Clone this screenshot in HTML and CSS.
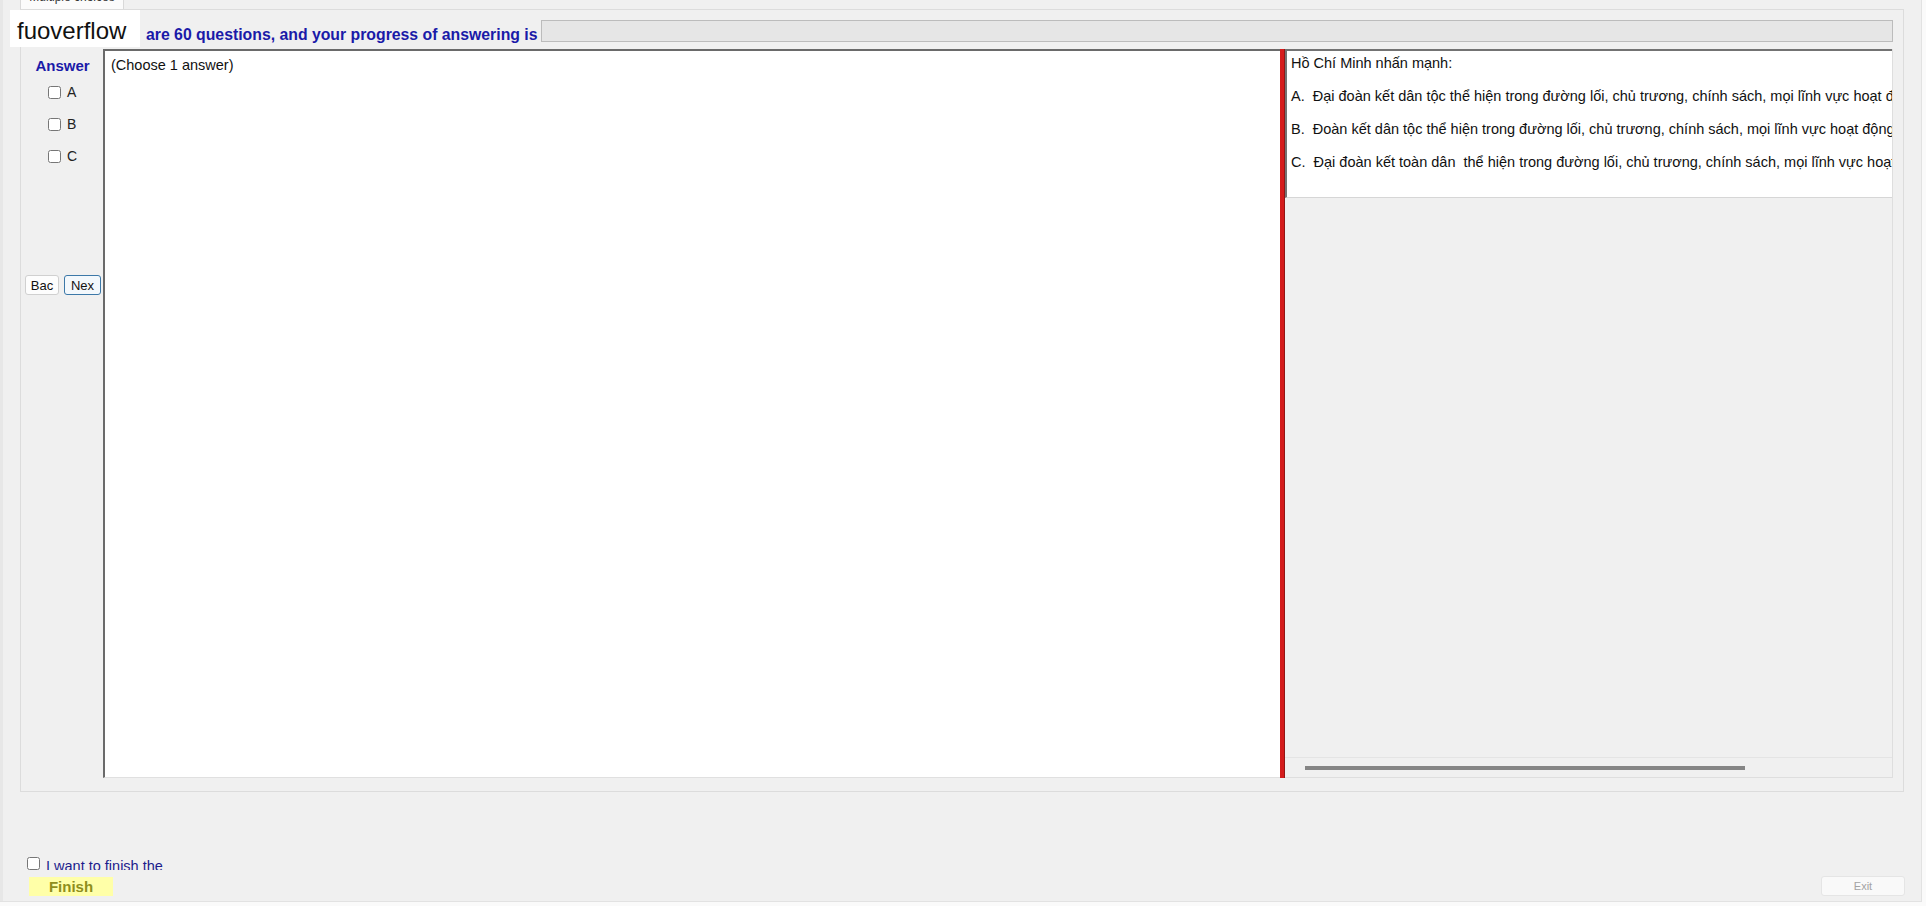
FILE: index.html
```html
<!DOCTYPE html>
<html lang="vi">
<head>
    <meta charset="UTF-8">
    <meta name="viewport" content="width=device-width, initial-scale=1.0">
    <title>Multiple choices</title>
    <link rel="stylesheet" href="styles.css">
</head>
<body>
    <div class="window">
        <div class="tabs">
            <div class="tab"><span>Multiple choices</span></div>
        </div>

        <div class="tabpage">
            <div class="header">
                <span class="count">are 60 questions, and your progress of answering is</span>
                <div class="progress"></div>
            </div>

            <div class="group">
                <div class="answers">
                    <div class="answer-title">Answer</div>
                    <label class="opt"><input type="checkbox"> A</label>
                    <label class="opt"><input type="checkbox"> B</label>
                    <label class="opt"><input type="checkbox"> C</label>
                    <div class="nav">
                        <button class="nav-btn">Bac</button>
                        <button class="nav-btn focused">Nex</button>
                    </div>
                </div>

                <div class="prompt">(Choose 1 answer)</div>

                <div class="splitter"></div>

                <div class="qpanel">
                    <div class="qtext">
                        <p>Hồ Chí Minh nhấn mạnh:</p>
                        <p>A.  Đại đoàn kết dân tộc thể hiện trong đường lối, chủ trương, chính sách, mọi lĩnh vực hoạt động</p>
                        <p>B.  Đoàn kết dân tộc thể hiện trong đường lối, chủ trương, chính sách, mọi lĩnh vực hoạt động</p>
                        <p>C.  Đại đoàn kết toàn dân  thể hiện trong đường lối, chủ trương, chính sách, mọi lĩnh vực hoạt động</p>
                    </div>
                    <div class="qfill"></div>
                    <div class="hscroll"><div class="thumb"></div></div>
                </div>
            </div>
        </div>

        <div class="footer">
            <div class="finish-box">
                <label class="finish-check"><input type="checkbox"> <span>I want to finish the</span></label>
                <button class="finish">Finish</button>
            </div>
            <button class="exit" disabled>Exit</button>
        </div>

        <div class="watermark">fuoverflow</div>
    </div>
</body>
</html>
```

FILE: styles.css
```css
* {
    box-sizing: border-box;
}
body {
    margin: 0;
    width: 1926px;
    height: 906px;
    overflow: hidden;
    background-color: #fafafa;
    font-family: "Liberation Sans", Arial, sans-serif;
    color: #111;
}
.window {
    position: relative;
    width: 1922px;
    height: 902px;
    background: linear-gradient(to right, #e7e7e7 3px, #f0f0f0 3px);
    border-right: 1px solid #e2e2e2;
    border-bottom: 1px solid #e2e2e2;
}

/* tab strip, scrolled half out of view */
.tabs {
    height: 9px;
    padding-left: 20px;
}
.tab {
    width: 104px;
    height: 9px;
    overflow: hidden;
    background-color: #fbfbfb;
    border-left: 1px solid #d9d9d9;
    border-right: 1px solid #d9d9d9;
    font-size: 12px;
    line-height: 14px;
    text-align: center;
    color: #333;
}
.tab span {
    display: block;
    margin-top: -10px;
}

.tabpage {
    margin-left: 20px;
    width: 1884px;
    height: 783px;
    border: 1px solid #dcdcdc;
}

.header {
    display: flex;
    align-items: flex-end;
    height: 39px;
    padding-left: 125px;
    padding-right: 10px;
}
.count {
    font-size: 15.8px;
    line-height: 18px;
    font-weight: bold;
    color: #1a1aa8;
    margin-bottom: 5px;
    white-space: nowrap;
}
.progress {
    flex: 1;
    height: 22px;
    margin-left: 3px;
    margin-bottom: 7px;
    background-color: #e6e6e6;
    border: 1px solid #bcbcbc;
}

.group {
    display: flex;
    width: 1871px;
    height: 729px;
    margin-left: 1px;
}

.answers {
    width: 81px;
    padding-top: 9px;
    display: flex;
    flex-direction: column;
}
.answer-title {
    text-align: center;
    font-size: 15px;
    line-height: 16px;
    font-weight: bold;
    color: #1a1aa8;
    margin-bottom: 2px;
}
.opt {
    display: flex;
    align-items: center;
    gap: 6px;
    height: 32px;
    padding-left: 26px;
    font-size: 14px;
    color: #222;
}
.opt input, .finish-check input {
    width: 13px;
    height: 13px;
    margin: 0;
}
.nav {
    display: flex;
    gap: 5px;
    margin-top: 103px;
    padding-left: 3px;
}
.nav-btn {
    width: 34px;
    height: 20px;
    padding: 0;
    font-family: "Liberation Sans", Arial, sans-serif;
    font-size: 13px;
    color: #111;
    background-color: #fdfdfd;
    border: 1px solid #d0d0d0;
    border-radius: 3px;
}
.nav-btn.focused {
    width: 37px;
    background-color: #f3f8fc;
    border-color: #3c78a8;
}

.prompt {
    width: 1177px;
    background-color: #fff;
    border-top: 2px solid #6a6a6a;
    border-left: 2px solid #6a6a6a;
    border-bottom: 1px solid #e0e0e0;
    padding: 6px 0 0 6px;
    font-size: 14.5px;
    line-height: 16px;
}

.splitter {
    width: 5px;
    background-color: #d41c1c;
    border-right: 1px solid #921616;
}

.qpanel {
    flex: 1;
    min-width: 0;
    display: flex;
    flex-direction: column;
    border-right: 1px solid #dedede;
    border-bottom: 1px solid #dedede;
}
.qtext {
    height: 149px;
    overflow: hidden;
    background-color: #fff;
    border-top: 2px solid #737373;
    border-left: 2px solid #737373;
    border-bottom: 1px solid #d6d6d6;
    padding: 4px 0 0 4px;
    font-size: 14.5px;
    line-height: 16px;
}
.qtext p {
    margin: 0 0 17px;
    white-space: pre;
}
.qfill {
    flex: 1;
}
.hscroll {
    height: 20px;
    border-top: 1px solid #e4e4e4;
    padding: 8px 0 0 20px;
}
.thumb {
    width: 440px;
    height: 4px;
    background-color: #858585;
}

.footer {
    display: flex;
    justify-content: space-between;
    align-items: flex-end;
    height: 110px;
    padding: 0 16px 6px 27px;
}
.finish-box {
    display: flex;
    flex-direction: column;
}
.finish-check {
    display: flex;
    align-items: flex-start;
    gap: 6px;
    height: 14px;
    overflow: hidden;
    font-size: 14.5px;
    line-height: 16px;
    color: #1c1c8c;
}
.finish-check input {
    margin-top: 1px;
}
.finish-check span {
    padding-top: 2px;
}
.finish {
    width: 84px;
    height: 19px;
    margin-top: 7px;
    margin-left: 2px;
    padding: 0;
    border: none;
    background-color: #ffffa8;
    font-family: "Liberation Sans", Arial, sans-serif;
    font-size: 15px;
    font-weight: bold;
    color: #8e8e1c;
}
.exit {
    width: 84px;
    height: 20px;
    padding: 0;
    background-color: #f9f9f9;
    border: 1px solid #e5e5e5;
    border-radius: 3px;
    font-family: "Liberation Sans", Arial, sans-serif;
    font-size: 11px;
    color: #a3a3a3;
}

/* site watermark lying over the header */
.watermark {
    position: absolute;
    left: 10px;
    top: 10px;
    width: 130px;
    height: 37px;
    padding: 5px 0 0 7px;
    background-color: #fff;
    font-size: 24px;
    line-height: 32px;
    color: #111;
}
```
